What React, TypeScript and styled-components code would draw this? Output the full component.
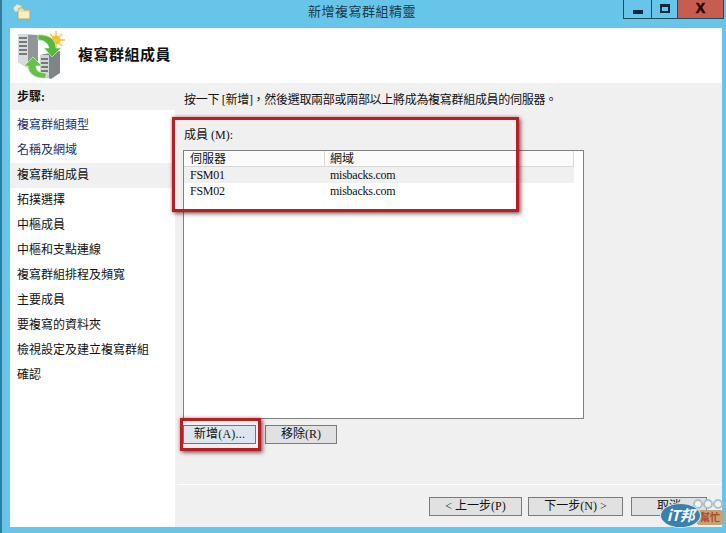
import styled, { createGlobalStyle } from "styled-components";

const steps = [
  { label: "複寫群組類型", done: true },
  { label: "名稱及網域", done: true },
  { label: "複寫群組成員", active: true },
  { label: "拓撲選擇" },
  { label: "中樞成員" },
  { label: "中樞和支點連線" },
  { label: "複寫群組排程及頻寬" },
  { label: "主要成員" },
  { label: "要複寫的資料夾" },
  { label: "檢視設定及建立複寫群組" },
  { label: "確認" },
];

const members = [
  { server: "FSM01", domain: "misbacks.com", selected: true },
  { server: "FSM02", domain: "misbacks.com" },
];

const FolderIcon = () => (
  <svg width="20" height="18" viewBox="0 0 20 18">
    <path d="M1 5 L5 1 L10 3 L9 8 L3 9 Z" fill="#e4ead8" stroke="#a9b8a4" strokeWidth="0.6" />
    <path d="M6 8 L6 16 L18 16 L18 7 L12 7 L11 5 L7 5 Z" fill="#efdc9c" stroke="#b9a565" strokeWidth="0.7" />
    <path d="M7 9 L17 9 L17 15 L7 15 Z" fill="#f9eec4" />
  </svg>
);

const ReplicationIcon = () => (
  <svg width="50" height="50" viewBox="0 0 50 50">
    <path d="M2 3 L22 4 L22 31 L12 37 L2 31 Z" fill="#8f9598" />
    <path d="M2 3 L12 3 L12 37 L2 31 Z" fill="#d8dbdb" />
    <path d="M3 7 H11 M3 11 H11 M3 15 H11 M3 19 H11 M3 23 H11" stroke="#555a5e" strokeWidth="1.5" />
    <path d="M24 24 L44 20 L44 42 L35 48 L24 44 Z" fill="#7f8487" />
    <path d="M24 24 L33 24 L33 47 L24 44 Z" fill="#d2d5d5" />
    <path d="M25 28 H32 M25 32 H32 M25 36 H32 M25 40 H32" stroke="#555a5e" strokeWidth="1.5" />
    <circle cx="40" cy="9" r="4.5" fill="#fbb62a" />
    <path d="M40 0 V18 M31 9 H49 M34 3 L46 15 M46 3 L34 15" stroke="#fbc23c" strokeWidth="1.4" />
    <path d="M22 4 C32 3 40 8 40 17 L45 17 L36 26 L28 17 L33 17 C32 12 28 9 22 9 Z" fill="#58b83c" stroke="#d8f0c8" strokeWidth="0.7" />
    <path d="M30 47 C20 48 12 43 12 35 L8 35 L17 26 L26 35 L20 35 C20 40 24 42 30 42 Z" fill="#66c34a" stroke="#d8f0c8" strokeWidth="0.7" />
  </svg>
);

const App = () => {
  return (
    <>
      <GlobalStyle />
      <Window>
        <TitleBar>
          <AppIcon>
            <FolderIcon />
          </AppIcon>
          <Title>新增複寫群組精靈</Title>
          <Controls>
            <MinimizeButton>
              <MinimizeGlyph />
            </MinimizeButton>
            <ControlButton>
              <MaximizeGlyph />
            </ControlButton>
            <CloseButton>X</CloseButton>
          </Controls>
        </TitleBar>

        <Content>
          <Header>
            <ReplicationIcon />
            <Heading>複寫群組成員</Heading>
          </Header>

          <Body>
            <Sidebar>
              <SidebarTitle>步驟:</SidebarTitle>
              <StepList>
                {steps.map((step) => (
                  <Step key={step.label} $active={step.active} $done={step.done}>
                    {step.label}
                  </Step>
                ))}
              </StepList>
            </Sidebar>

            <Main>
              <MainTop>
                <Intro>按一下 [新增]，然後選取兩部或兩部以上將成為複寫群組成員的伺服器。</Intro>
                <FieldLabel>成員 (M):</FieldLabel>
                <ListBox>
                  <ListHeader>
                    <HeaderCell $first>伺服器</HeaderCell>
                    <HeaderCell>網域</HeaderCell>
                  </ListHeader>
                  {members.map((member) => (
                    <ListRow key={member.server} $selected={member.selected}>
                      <Cell $first>{member.server}</Cell>
                      <Cell>{member.domain}</Cell>
                    </ListRow>
                  ))}
                </ListBox>
                <ListActions>
                  <AddButton>新增(A)...</AddButton>
                  <RemoveButton>移除(R)</RemoveButton>
                </ListActions>
              </MainTop>

              <Footer>
                <BackButton>&lt; 上一步(P)</BackButton>
                <NextButton>下一步(N) &gt;</NextButton>
                <CancelButton>取消</CancelButton>
              </Footer>
            </Main>
          </Body>
        </Content>

        <MembersHighlight />
        <AddHighlight />

        <Watermark>
          <Bubbles>
            <Bubble />
            <Bubble />
            <Bubble />
          </Bubbles>
          <HelpTag>幫忙</HelpTag>
          <LogoOval>iT邦</LogoOval>
        </Watermark>
      </Window>
    </>
  );
};

export default App;

const GlobalStyle = createGlobalStyle`
  html, body {
    margin: 0;
    padding: 0;
    background: #66c5e8;
    overflow: hidden;
  }

  * {
    box-sizing: border-box;
  }
`;

const Window = styled.div`
  position: relative;
  width: 726px;
  height: 533px;
  display: flex;
  flex-direction: column;
  padding: 0 4px 6px 8px;
  background: #66c5e8;
  border-left: 2px solid #2f7f9c;
  font-family: "Liberation Serif", "Noto Sans CJK TC", serif;
  font-size: 12px;
  color: #111;
`;

const TitleBar = styled.div`
  position: relative;
  height: 28px;
  flex-shrink: 0;
  display: flex;
  justify-content: center;
  padding-top: 3px;
`;

const AppIcon = styled.div`
  position: absolute;
  left: 2px;
  top: 3px;
`;

const Title = styled.div`
  font-size: 13px;
  line-height: 18px;
  color: #1d3a48;
  margin-left: -8px;
  letter-spacing: 0.5px;
`;

const Controls = styled.div`
  position: absolute;
  right: -2px;
  top: 0;
  height: 19px;
  display: flex;
  border: 1px solid #1f4a5e;
  border-top: none;
`;

const ControlButton = styled.div`
  width: 26px;
  display: flex;
  align-items: center;
  justify-content: center;
  border-right: 1px solid #1f4a5e;
`;

const MinimizeButton = styled(ControlButton)`
  width: 28px;
`;

const MinimizeGlyph = styled.div`
  width: 10px;
  height: 4px;
  margin-top: 6px;
  background: #0d2a3a;
`;

const MaximizeGlyph = styled.div`
  width: 10px;
  height: 9px;
  margin-bottom: 2px;
  border: 2px solid #0d2a3a;
  border-top-width: 3px;
`;

const CloseButton = styled.div`
  width: 45px;
  background: #c75c50;
  color: #1f0808;
  font-family: "Liberation Sans", sans-serif;
  font-size: 14px;
  font-weight: 700;
  line-height: 17px;
  text-align: center;
  -webkit-text-stroke: 0.5px #1f0808;
`;

const Content = styled.div`
  flex: 1;
  min-height: 0;
  display: flex;
  flex-direction: column;
  background: #f0f0f0;
`;

const Header = styled.div`
  height: 55px;
  flex-shrink: 0;
  display: flex;
  align-items: center;
  gap: 12px;
  padding: 1px 0 0 6px;
  background: #fff;
`;

const Heading = styled.div`
  font-size: 15px;
  font-weight: 700;
  letter-spacing: 0.5px;
  color: #111;
  margin-bottom: 5px;
`;

const Body = styled.div`
  flex: 1;
  min-height: 0;
  display: flex;
  margin-top: 4px;
  gap: 2px;
`;

const Sidebar = styled.div`
  width: 165px;
  flex-shrink: 0;
  background: #fff;
`;

const SidebarTitle = styled.div`
  height: 23px;
  padding-left: 7px;
  line-height: 20px;
  font-weight: 700;
  background: #f0f0f0;
`;

const StepList = styled.div`
  padding-top: 3px;
`;

const Step = styled.div<{ $active?: boolean; $done?: boolean }>`
  height: 25px;
  padding-left: 7px;
  line-height: 25px;
  background: ${(p) => (p.$active ? "#f0f0f0" : "#fff")};
  color: ${(p) => (p.$done ? "#1b2f6b" : "#111")};
`;

const Main = styled.div`
  flex: 1;
  min-width: 0;
  display: flex;
  flex-direction: column;
`;

const MainTop = styled.div`
  height: 398px;
  flex-shrink: 0;
  padding-left: 6px;
  border-bottom: 1px solid #fff;
`;

const Intro = styled.div`
  height: 34px;
  padding: 4px 0 0 1px;
  line-height: 18px;
  letter-spacing: -0.3px;
`;

const FieldLabel = styled.div`
  height: 29px;
  padding: 5px 0 0 1px;
  line-height: 18px;
`;

const ListBox = styled.div`
  width: 401px;
  height: 269px;
  background: #fff;
  border: 1px solid #808080;
  padding-right: 9px;
`;

const ListHeader = styled.div`
  height: 16px;
  display: flex;
  background: #fbfbfb;
  border-bottom: 1px solid #d9d9d9;
  border-right: 1px solid #d9d9d9;
`;

const HeaderCell = styled.div<{ $first?: boolean }>`
  width: ${(p) => (p.$first ? "141px" : "auto")};
  flex: ${(p) => (p.$first ? "none" : "1")};
  padding-left: ${(p) => (p.$first ? "6px" : "5px")};
  line-height: 16px;
  border-right: ${(p) => (p.$first ? "1px solid #d9d9d9" : "none")};
`;

const ListRow = styled.div<{ $selected?: boolean }>`
  height: 16px;
  display: flex;
  background: ${(p) => (p.$selected ? "#f0f0f0" : "#fff")};
`;

const Cell = styled.div<{ $first?: boolean }>`
  width: ${(p) => (p.$first ? "140px" : "auto")};
  padding-left: 6px;
  line-height: 16px;
  letter-spacing: -0.25px;
`;

const ListActions = styled.div`
  display: flex;
  gap: 9px;
  margin-top: 6px;
`;

const Button = styled.div`
  height: 19px;
  text-align: center;
  line-height: 17px;
  background: #e1e1e1;
  border: 1px solid #7a7a7a;
`;

const AddButton = styled(Button)`
  width: 73px;
  background: #dde6ee;
  border-color: #5e7a8f;
  letter-spacing: 0.2px;
`;

const RemoveButton = styled(Button)`
  width: 72px;
`;

const Footer = styled.div`
  display: flex;
  gap: 6px;
  padding: 12px 0 0 252px;
`;

const BackButton = styled(Button)`
  width: 93px;
`;

const NextButton = styled(Button)`
  width: 95px;
`;

const CancelButton = styled(Button)`
  width: 76px;
  margin-left: 2px;
`;

const MembersHighlight = styled.div`
  position: absolute;
  left: 170px;
  top: 117px;
  width: 347px;
  height: 95px;
  border: 3px solid #b81f24;
  box-shadow: 2px 2px 4px rgba(60, 20, 20, 0.55), 0 0 3px rgba(184, 31, 36, 0.5);
`;

const AddHighlight = styled.div`
  position: absolute;
  left: 178px;
  top: 418px;
  width: 81px;
  height: 33px;
  border: 3px solid #b81f24;
  box-shadow: 2px 2px 4px rgba(60, 20, 20, 0.55), 0 0 3px rgba(184, 31, 36, 0.5);
`;

const Watermark = styled.div`
  position: absolute;
  left: 656px;
  top: 498px;
  width: 68px;
  height: 32px;
`;

const Bubbles = styled.div`
  position: absolute;
  left: 35px;
  top: 1px;
  display: flex;
`;

const Bubble = styled.div`
  width: 10px;
  height: 10px;
  border-radius: 50%;
  background: #f3f3ee;
  border: 2px solid #a9c2d0;
`;

const HelpTag = styled.div`
  position: absolute;
  right: 2px;
  top: 12px;
  width: 28px;
  height: 15px;
  padding-left: 4px;
  border-radius: 4px;
  background: #c4a277;
  color: #b0492f;
  font-family: "Noto Sans CJK TC", sans-serif;
  font-size: 10px;
  font-weight: 700;
  line-height: 14px;
`;

const LogoOval = styled.div`
  position: absolute;
  left: 2px;
  top: 5px;
  width: 41px;
  height: 25px;
  border-radius: 50%;
  background: #3a7fae;
  border: 1px solid #d9e8f0;
  color: #f4fbff;
  font-family: "Noto Sans CJK TC", sans-serif;
  font-size: 15px;
  font-style: italic;
  font-weight: 700;
  line-height: 22px;
  text-align: center;
  letter-spacing: -0.5px;
`;
